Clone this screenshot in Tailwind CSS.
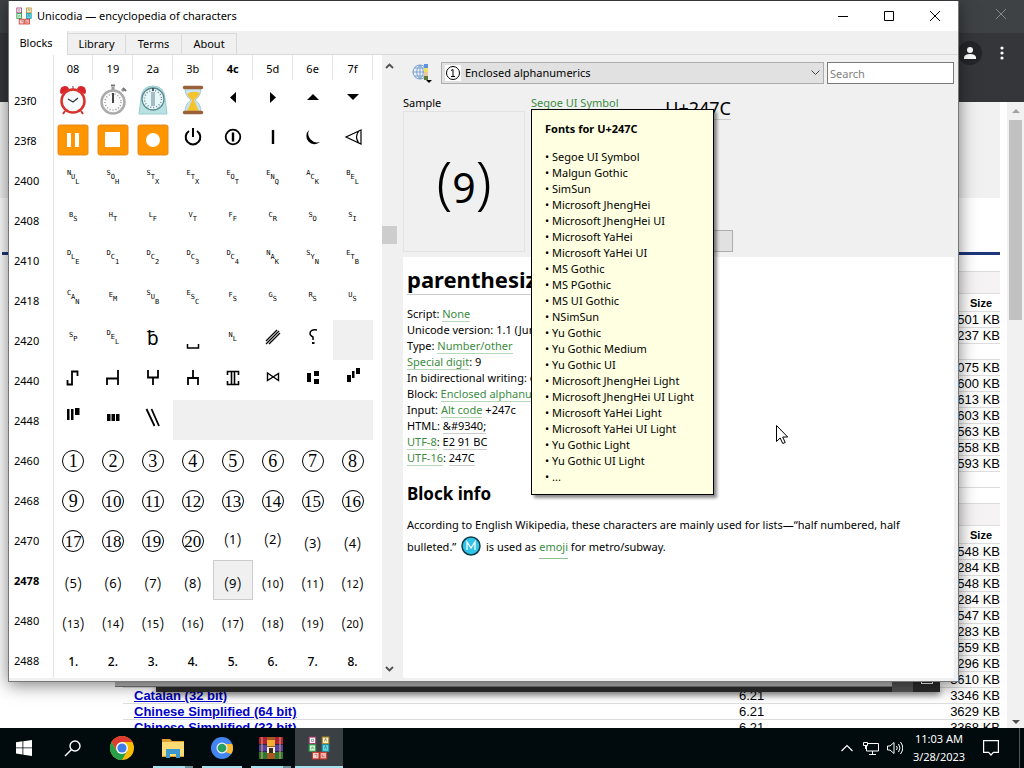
<!DOCTYPE html>
<html lang="en">
<head>
  <meta charset="UTF-8" />
  <meta name="viewport" content="width=device-width, initial-scale=1.0" />
  <title>Unicodia — encyclopedia of characters</title>
  <script src="https://cdn.jsdelivr.net/npm/@tailwindcss/browser@4"></script>
</head>
<body class="h-screen flex flex-col overflow-hidden bg-white text-black text-[11px] leading-4 font-['Noto_Sans',sans-serif]">

  <svg class="hidden">
    <symbol id="logo" viewBox="0 0 20 22">
      <g stroke-width="1">
        <rect x="1" y="1" width="6" height="6" fill="#fff" stroke="#a03a70"/>
        <rect x="13" y="1" width="6" height="6" fill="#fdf3c0" stroke="#b08a30"/>
        <rect x="1" y="8" width="6" height="6" fill="#c8f5d0" stroke="#2a9a48"/>
        <rect x="13" y="8" width="6" height="6" fill="#5fdcec" stroke="#1896a8"/>
        <rect x="4" y="15" width="6" height="6" fill="#ffd0cc" stroke="#c8382c"/>
        <rect x="11" y="15" width="6" height="6" fill="#ffb0a8" stroke="#c8382c"/>
      </g>
      <path d="M3 3h2v2H3zM15 5l1-3 1 3M3 12l1-2 1 2M15 12l1-3 1 3M6 17h2v2M13 17v2h2" fill="none" stroke="#555" stroke-width=".5"/>
    </symbol>
  </svg>

  <div class="relative flex-1 overflow-hidden">

    <!-- browser behind -->
    <div class="absolute inset-0 flex flex-col bg-white">
      <div class="h-[33px] shrink-0 bg-[#3f4245] flex justify-end">
        <div class="w-[46px] flex items-start justify-center pt-2">
          <svg class="w-3 h-3" viewBox="0 0 12 12" stroke="#85888b" fill="none"><path d="M1 1l10 10M11 1L1 11"/></svg>
        </div>
      </div>
      <div class="h-[69px] shrink-0 bg-[#35363a] flex justify-end gap-[14px] pt-2 pr-4">
        <span class="w-6 h-6 rounded-full bg-[#242528] flex items-center justify-center">
          <svg class="w-3 h-3" viewBox="0 0 12 12" fill="#fff"><circle cx="6" cy="3" r="3"/><path d="M0 12V10q1-3 6-3t6 3v2z"/></svg>
        </span>
        <svg class="w-3 h-6" viewBox="0 0 12 24" fill="#fff"><circle cx="6" cy="7" r="1.600"/><circle cx="6" cy="12" r="1.600"/><circle cx="6" cy="17" r="1.600"/></svg>
      </div>
      <div class="flex-1 flex min-h-0 font-['Liberation_Sans',sans-serif] text-[13px]">
        <div class="flex-1 overflow-hidden mr-[7px]">
          <div class="h-24 bg-[#f1f1f1]"></div>
          <div class="mt-[54px] ml-[2px] h-[3px] bg-[#1c3679]"></div>
          <div class="pl-[123px] pt-4">
            <table class="w-full table-fixed border-collapse" id="langs">
              <colgroup><col class="w-[616px]" /><col /><col class="w-[90px]" /></colgroup>
            </table>
          </div>
        </div>
        <div class="w-[17px] bg-[#f1f1f1] flex flex-col items-center pt-[7px] pb-1">
          <svg class="w-2 h-1 shrink-0" viewBox="0 0 8 4" fill="#a3a3a3"><path d="M0 4l4-4 4 4z"/></svg>
          <div class="mt-[7px] w-[13px] h-[200px] bg-[#c1c1c1]"></div>
          <svg class="mt-auto w-2 h-1 shrink-0" viewBox="0 0 8 4" fill="#505050"><path d="M0 0h8l-4 4z"/></svg>
        </div>
      </div>
    </div>

    <!-- edges of the other windows -->
    <div class="absolute left-[156px] right-[84px] bottom-[36px] h-2 bg-[#2b2b2b] shadow-[0_3px_6px_rgba(0,0,0,.5)]"></div>
    <div class="absolute left-[115px] right-[116px] bottom-[41px] h-6 bg-[#bcbcbc] border-b border-[#777]"></div>
    <div class="absolute right-[84px] bottom-[36px] w-12 h-6 bg-[#555] flex justify-end">
      <div class="w-[27px] bg-[#2b2b2b] flex justify-center pt-2"><div class="w-3 h-2 border border-white"></div></div>
    </div>

    <!-- Unicodia -->
    <div class="absolute left-2 right-[65px] top-px bottom-[46px] flex flex-col bg-[#f0f0f0] border-x border-b border-[#777] shadow-[0_3px_16px_rgba(0,0,0,.5)]">
      <header class="h-[30px] shrink-0 bg-white flex items-center">
        <svg class="ml-[7px] w-4 h-[18px]"><use href="#logo"/></svg>
        <h1 class="ml-[5px] flex-1">Unicodia — encyclopedia of characters</h1>
        <button class="w-[46px] h-full flex items-center justify-center" aria-label="Minimize"><svg class="w-3 h-3" viewBox="0 0 12 12"><path d="M1 6.500h10" stroke="#000"/></svg></button>
        <button class="w-[46px] h-full flex items-center justify-center" aria-label="Maximize"><svg class="w-3 h-3" viewBox="0 0 12 12"><path d="M1.500 1.500h9v9h-9z" fill="none" stroke="#000"/></svg></button>
        <button class="w-[46px] h-full flex items-center justify-center" aria-label="Close"><svg class="w-3 h-3" viewBox="0 0 12 12"><path d="M1 1l10 10M11 1L1 11" fill="none" stroke="#000"/></svg></button>
      </header>

      <nav class="h-6 shrink-0 flex items-end border-b border-[#d9d9d9]">
        <button class="w-[59px] h-6 -mb-px pr-1 bg-white border-r border-[#d9d9d9]">Blocks</button>
        <button class="w-[58px] h-[21px] border-t border-r border-[#d9d9d9]">Library</button>
        <button class="w-[56px] h-[21px] border-t border-r border-[#d9d9d9]">Terms</button>
        <button class="w-[55px] h-[21px] border-t border-r border-[#d9d9d9]">About</button>
      </nav>

      <div class="flex-1 min-h-0 flex pb-[3px] pr-1">
        <!-- character grid -->
        <section class="w-[394px] shrink-0 flex overflow-hidden">
          <div class="flex-1 bg-white overflow-hidden">
            <table class="table-fixed border-collapse w-[364px]">
              <colgroup><col class="w-11" /></colgroup>
              <thead id="cols"></thead>
              <tbody id="chars"></tbody>
            </table>
          </div>
          <div class="w-[15px] mr-[6px] flex flex-col items-center pt-2 pb-1">
            <svg class="w-[9px] h-[6px]" viewBox="0 0 9 6" fill="none" stroke="#505050" stroke-width="1.800"><path d="M1 5l3.500-3.500L8 5"/></svg>
            <div class="mt-[157px] w-full h-[18px] bg-[#cdcdcd]"></div>
            <svg class="mt-auto mb-[2px] w-[9px] h-[6px]" viewBox="0 0 9 6" fill="none" stroke="#505050" stroke-width="1.800"><path d="M1 1l3.500 3.500L8 1"/></svg>
          </div>
        </section>

        <section class="flex-1 min-w-0 flex flex-col">
          <div class="h-[202px] shrink-0 pt-[7px]">
            <div class="flex items-center pl-[9px] h-[22px]">
              <button class="w-5 h-5 mr-[9px]" aria-label="Sort blocks">
                <svg class="w-5 h-5" viewBox="0 0 20 20" fill="none">
                  <circle cx="8" cy="9" r="7" stroke="#6d9bd0"/>
                  <path d="M8 2v14M1 9h14M2.500 5h11M2.500 13h11M8 2q-7 7 0 14M8 2q7 7 0 14" stroke="#6d9bd0" stroke-width=".9"/>
                  <path d="M12 1h4v4h-4z" fill="#5b93e0"/><path d="M12 5h4v4h-4z" fill="#f0e060"/><path d="M12 9h4v4h-4z" fill="#e9c9a0"/><path d="M12 13h4v4h-4z" fill="#5c7a3c"/>
                  <path d="M14 17h6l-3 3z" fill="#000"/>
                </svg>
              </button>
              <div class="relative flex-1">
                <select aria-label="Block" class="appearance-none block w-full h-[22px] pl-[23px] bg-[#e1e1e1] border border-[#adadad]"><option>Enclosed alphanumerics</option></select>
                <svg class="absolute left-1 top-[3px] w-4 h-4 bg-white" viewBox="0 0 16 16" fill="none" stroke="#000"><circle cx="8" cy="8" r="6.500"/><path d="M6 5.500l2-1v7M6 11.500h4"/></svg>
                <svg class="absolute right-1 top-2 w-[9px] h-[6px]" viewBox="0 0 9 6" fill="none" stroke="#444"><path d="M.5.5l4 4 4-4"/></svg>
              </div>
              <input type="text" aria-label="Search" placeholder="Search" class="ml-[3px] w-[127px] h-[22px] px-[2px] bg-white border border-[#7a7a7a] placeholder:text-[#7f7f7f]" />
            </div>
            <div class="flex pt-[11px]">
              <div class="w-[122px] mr-[6px]">
                <p>Sample</p>
                <div class="h-[141px] border border-[#e2e2e2] flex items-center justify-center leading-none">
                  <span class="text-[57px] font-light">(</span><span class="text-[41px] pt-3">9</span><span class="text-[57px] font-light">)</span>
                </div>
              </div>
              <div class="w-[202px] flex flex-col">
                <div class="flex justify-between">
                  <a href="#" class="text-[#3c8c42]">Segoe UI Symbol</a>
                  <span class="mr-[2px] h-[25px] pt-[2px] text-[18px] leading-[22px] border-b border-[#ccc]">U+247C</span>
                </div>
                <button class="mt-auto h-[22px] bg-[#e1e1e1] border border-[#adadad]" aria-label="Copy"></button>
              </div>
            </div>
          </div>

          <article class="flex-1 bg-white pl-1 pt-2">
            <h2 class="text-[22px] leading-7 font-bold"><span class="border-b border-[#ccc]">parenthesized digit nine</span></h2>
            <div class="pt-[13px] whitespace-nowrap">
              <p>Script: <a href="#" class="text-[#3c8c42] border-b border-[#b5d8b5]">None</a></p>
              <p>Unicode version: 1.1 (June 1993)</p>
              <p>Type: <a href="#" class="text-[#3c8c42] border-b border-[#b5d8b5]">Number/other</a></p>
              <p><a href="#" class="text-[#3c8c42] border-b border-[#b5d8b5]">Special digit</a>: 9</p>
              <p>In bidirectional writing: other</p>
              <p>Block: <a href="#" class="text-[#3c8c42] border-b border-[#b5d8b5]">Enclosed alphanumerics</a></p>
              <p>Input: <a href="#" class="text-[#3c8c42] border-b border-[#b5d8b5]">Alt code</a> +247c</p>
              <p>HTML: <span class="border-b border-[#ccc]">&amp;#9340;</span></p>
              <p><a href="#" class="text-[#3c8c42] border-b border-[#b5d8b5]">UTF-8</a>: <span class="border-b border-[#ccc]">E2 91 BC</span></p>
              <p><a href="#" class="text-[#3c8c42] border-b border-[#b5d8b5]">UTF-16</a>: <span class="border-b border-[#ccc]">247C</span></p>
            </div>
            <h3 class="mt-4 text-[17px] leading-6 font-bold">Block info</h3>
            <p class="mt-2 max-w-[530px] leading-[22px]">According to English Wikipedia, these characters are mainly used for lists—“half numbered, half<br />bulleted.”
              <svg class="inline mx-[2px] -mt-1 w-5 h-5" viewBox="0 0 20 20" fill="none"><circle cx="10" cy="10" r="9" fill="#2fc4e8" stroke="#153a48" stroke-width="1.500"/><path d="M6 14V6l4 6 4-6v8" stroke="#fff" stroke-width="1.300"/></svg>
              is used as <a href="#" class="pb-1 text-[#3c8c42] border-b border-[#8fc08f]">emoji</a> for metro/subway.</p>
          </article>
        </section>
      </div>
    </div>

    <!-- font tooltip -->
    <div class="absolute left-[531px] top-[109px] w-[183px] h-[386px] pl-[13px] pt-[11px] bg-[#ffffe1] border border-black shadow-[3px_3px_3px_rgba(0,0,0,.45)] whitespace-nowrap">
      <h4 class="font-bold mb-3">Fonts for U+247C</h4>
      <ul id="fonts"></ul>
    </div>

    <!-- pointer -->
    <svg class="absolute left-[776px] top-[425px] w-3 h-5" viewBox="0 0 12 20"><path d="M.5.5v16l3.700-3.500 2.500 5.500 2.500-1-2.500-5.500h5z" fill="#fff" stroke="#000"/></svg>
  </div>

  <!-- taskbar -->
  <footer class="h-10 shrink-0 bg-[#010a0d] text-white flex">
    <button class="w-12 flex items-center justify-center" aria-label="Start"><svg class="w-4 h-4" viewBox="0 0 16 16" fill="#fff"><path d="M0 2.200L6.500 1.300V7.500H0zM7.300 1.200L16 0v7.500H7.300zM0 8.300h6.500v6.200L0 13.600zM7.300 8.300H16V16l-8.700-1.200z"/></svg></button>
    <button class="w-12 flex items-center justify-center" aria-label="Search"><svg class="w-[17px] h-[17px]" viewBox="0 0 17 17" fill="none" stroke="#fff" stroke-width="1.400"><circle cx="11" cy="6" r="5"/><path d="M7.500 9.500L1 16"/></svg></button>
    <button class="w-[52px] flex items-center justify-center" aria-label="Chrome">
      <svg class="w-6 h-6" viewBox="0 0 24 24"><circle cx="12" cy="12" r="12" fill="#fbbc05"/><path d="M1.600 6A12 12 0 0 1 22.400 6H12L6.800 15z" fill="#e03b30"/><path d="M1.600 6A12 12 0 0 0 12 24l5.200-9-10.400 0z" fill="#28a048"/><circle cx="12" cy="12" r="6" fill="#fff"/><circle cx="12" cy="12" r="4.600" fill="#3f7de8"/></svg>
    </button>
    <button class="w-[49px] flex flex-col items-center" aria-label="File Explorer">
      <svg class="mt-[9px] w-[22px] h-[22px]" viewBox="0 0 22 22"><path d="M0 2h8l2 2h12v16H0z" fill="#e0a030"/><path d="M0 5h22v14H0z" fill="#fbdc74"/><path d="M4 12h14v9h-4v-4H8v4H4z" fill="#3c98d0"/></svg>
      <span class="mt-auto w-10 h-[2px] bg-[#a5e0ee] border-r-8 border-[#6d929c]"></span>
    </button>
    <button class="w-[49px] flex flex-col items-center" aria-label="Chromium">
      <svg class="mt-[9px] w-[22px] h-[22px]" viewBox="0 0 22 22"><circle cx="11" cy="11" r="11" fill="#4285f0"/><path d="M14 7h7.200a11 11 0 0 1-1 10L14 15z" fill="#fbbc30"/><circle cx="11" cy="11" r="5.500" fill="#e6f0ff"/><circle cx="11" cy="11" r="4.300" fill="#28a060"/></svg>
      <span class="mt-auto w-10 h-[2px] bg-[#a5e0ee]"></span>
    </button>
    <button class="w-[49px] flex flex-col items-center" aria-label="WinRAR">
      <svg class="mt-[9px] w-6 h-[22px]" viewBox="0 0 24 22"><path d="M0 0h24v7H0z" fill="#b02038"/><path d="M0 7.500h24v7H0z" fill="#5040a8"/><path d="M0 15h24v7H0z" fill="#287838"/><path d="M3 0v22M21 0v22" stroke="#d0a050" stroke-width="1.200"/><path d="M8 0h8v22H8z" fill="#a85820"/><path d="M8 3h8v6H8z" fill="#f0b030"/><path d="M8 10h8v6H8z" fill="#f4ecd8"/><path d="M10 11h4v5h-4z" fill="#3a2a20"/></svg>
      <span class="mt-auto w-10 h-[2px] bg-[#a5e0ee] border-r-8 border-[#6d929c]"></span>
    </button>
    <button class="w-12 flex flex-col items-center bg-[#3a4043]" aria-label="Unicodia">
      <svg class="mt-2 w-[22px] h-6"><use href="#logo"/></svg>
      <span class="mt-auto w-full h-[2px] bg-[#a5e0ee]"></span>
    </button>
    <div class="ml-auto flex items-center">
      <svg class="w-3 h-3" viewBox="0 0 12 12" fill="none" stroke="#fff" stroke-width="1.200"><path d="M.5 9L6 3.500 11.500 9"/></svg>
      <svg class="ml-[10px] w-4 h-4" viewBox="0 0 16 16" fill="none" stroke="#fff"><path d="M5 3.500h10.500v7.500H3.500V6M9.500 11v3M6 14.500h7M.5 2.500h4v3h-4zM2.500 5.500V9"/></svg>
      <svg class="ml-2 w-4 h-4" viewBox="0 0 16 16" fill="none" stroke="#fff"><path d="M.5 6h2.500l4-3.500v11L3 10H.5z"/><path d="M9.500 6q1.500 2 0 4M11.500 4q3 4 0 8M13.500 2q4.500 6 0 12"/></svg>
      <div class="ml-2 w-[56px] text-center leading-[18px]"><p>11:03 AM</p><p>3/28/2023</p></div>
      <svg class="ml-[16px] mr-5 w-4 h-4" viewBox="0 0 16 16" fill="none" stroke="#fff" stroke-width="1.200"><path d="M.6.6h14.800v11.800h-5L8 15l-2.400-2.600h-5z"/></svg>
      <span class="w-[5px] h-10 border-l border-[#555]"></span>
    </div>
  </footer>

  <script>
    const svg = (body) => `<svg class="mx-auto w-8 h-8" viewBox="0 0 32 32" fill="none" stroke="#000" stroke-width="1.5">${body}</svg>`;
    const solid = (d) => svg(`<path d="${d}" fill="#000" stroke="none"/>`);
    const button = (body) => svg(`<rect x="1" y="1" width="30" height="30" rx="2" fill="#ff9500" stroke="#e88a1c" stroke-width="1"/>${body}`);
    // control pictures: letters going down in steps
    const steps = ["", "mt-1", "mt-[9px]"];
    const ctl = (s) => `<div class="flex justify-center pb-1.5 font-['DejaVu_Sans_Mono',monospace] text-[7px] leading-[6px]">${[...s].map((c, i) => `<span class="${steps[i]}">${c}</span>`).join("")}</div>`;
    const circ = (n) => `<div class="mx-auto mt-[2px] w-[22px] h-[22px] rounded-full border border-black flex items-center justify-center font-['Liberation_Serif',serif] ${n > 9 ? "text-[17px]" : "text-[18px]"} leading-none">${n}</div>`;
    const par = (n) => `<div class="flex items-center justify-center ${n < 3 ? "pb-1" : "pt-1"} leading-none"><span class="text-[17px] font-light">(</span><span class="${n > 9 ? "text-[11px]" : "text-[13px]"} pt-[2px]">${n}</span><span class="text-[17px] font-light">)</span></div>`;
    const dot = (n) => `<div class="pt-1 text-[12px] font-medium">${n}.</div>`;

    const clock = svg(`<path d="M8 27l-2 3M24 27l2 3" stroke="#c33" stroke-width="2"/><path d="M3 8q0-6 5-6 3 0 4 3L5 10q-2 0-2-2zM29 8q0-6-5-6-3 0-4 3l7 5q2 0 2-2z" fill="#d8242a" stroke="none"/><path d="M16 2v4" stroke="#888"/><circle cx="16" cy="17" r="11.500" fill="#f6fafa" stroke="#d8322c" stroke-width="2.500"/><path d="M11 15l5 3 5-4" stroke="#333" stroke-width="1.200"/>`);
    const stopwatch = svg(`<path d="M16 3v4M25 7l2-2" stroke="#999" stroke-width="3"/><path d="M14 1.500h4M26 4l3 3" stroke="#777" stroke-width="2"/><circle cx="16" cy="18" r="11.500" fill="#fafafa" stroke="#aaa" stroke-width="2.500"/><circle cx="16" cy="18" r="8" stroke="#999" stroke-width="1.500" stroke-dasharray="1 2"/><path d="M16 9v10" stroke="#444" stroke-width="2"/>`);
    const timer = svg(`<path d="M4 14Q5 2 16 2t12 12l2 16H2z" fill="#b8e2e2" stroke="#9accd0" stroke-width="1"/><circle cx="16" cy="15" r="11" fill="#e8f8f8" stroke="#5c8a94" stroke-width="1.300"/><circle cx="16" cy="15" r="8.500" stroke="#789" stroke-dasharray="1 2"/><path d="M14 8h4v14h-4z" fill="#a4bcc4" stroke="none"/><path d="M16 4v3" stroke="#333"/>`);
    const hourglass = svg(`<path d="M8 4q0 8 6 12-6 4-6 12h16q0-8-6-12 6-4 6-12z" fill="#c9e4f0" stroke="#a9c8d8" stroke-width="1"/><path d="M10 10q6-4 13-1-2 4-6 7l5 11H10l5-11q-4-3-5-6z" fill="#f4c430" stroke="none"/><path d="M7.500 3.500h17M7.500 28.500h17" stroke="#9a6038" stroke-width="3.500" stroke-linecap="round"/>`);

    const rows = [
      ["23f0", [clock, stopwatch, timer, hourglass,
        solid("M19 8v11l-6-5.500z"), solid("M13 8v11l6-5.500z"), solid("M10 16h12l-6-6z"), solid("M10 10h12l-6 6z")]],
      ["23f8", [
        button(`<path d="M10 9h4v14h-4zM18 9h4v14h-4z" fill="#fff" stroke="none"/>`),
        button(`<path d="M8 8h15v15H8z" fill="#fff" stroke="none"/>`),
        button(`<circle cx="16" cy="16" r="7" fill="#fff" stroke="none"/>`),
        svg(`<path d="M12 7a7.300 7.300 0 1 0 8 0M16 4v9" stroke-width="2"/>`),
        svg(`<circle cx="16" cy="13" r="7.300" stroke-width="1.800"/><path d="M16 8.500v9" stroke-width="2.400"/>`),
        svg(`<path d="M16 6v14" stroke-width="2.400"/>`),
        solid("M12 6a8 8 0 1 0 11 12A9 9 0 0 1 12 6z"),
        svg(`<path d="M24 6L9 13l15 7zM21.500 7.500q-4 5.500 0 11M24 6v14" stroke-width="1.200"/>`)]],
      ["2400", ["NUL", "SOH", "STX", "ETX", "EOT", "ENQ", "ACK", "BEL"].map(ctl)],
      ["2408", ["BS", "HT", "LF", "VT", "FF", "CR", "SO", "SI"].map(ctl)],
      ["2410", ["DLE", "DC1", "DC2", "DC3", "DC4", "NAK", "SYN", "ETB"].map(ctl)],
      ["2418", ["CAN", "EM", "SUB", "ESC", "FS", "GS", "RS", "US"].map(ctl)],
      ["2420", [ctl("SP"), ctl("DEL"),
        `<div class="pb-1 text-[19px] font-['Noto_Sans',sans-serif]">ƀ</div>`,
        svg(`<path d="M10.500 20v4h11v-4"/>`), ctl("NL"),
        svg(`<path d="M9 17l11-11M9 20L22 7M12 20L23 9" stroke-width="1.300"/>`),
        svg(`<path d="M20 6q-7-1-7 3.500 0 2 3 3.500v3"/><path d="M15 18h2.500v2H15z" fill="#000" stroke="none"/>`), null]],
      ["2440", [
        svg(`<path d="M10.500 16v4.500h4.500V7.500h5.500v4.500" stroke-width="1.800"/>`),
        svg(`<path d="M10 21v-6.500h11V21M21 6v10" stroke-width="1.800"/>`),
        svg(`<path d="M11 6v7.500h10V6M16 13.500V21" stroke-width="1.800"/>`),
        svg(`<path d="M11 21v-7h10v7M16 14V6" stroke-width="1.800"/>`),
        svg(`<path d="M10.500 11V7.500h11V11M10.500 17v3.500h11V17M14.500 7v13M17.500 7v13" stroke-width="1.600"/>`),
        svg(`<path d="M10.500 9v7.500l11-7v7z" stroke-width="1.400"/>`),
        solid("M10 9h4v9h-4zM17 7h5v5h-5zM17 15h5v5h-5z"),
        solid("M10 11h4v7h-4zM15 7h2.500v7H15zM19 4h4v6h-4z")]],
      ["2448", [
        solid("M10 5h2.500v11H10zM14 5h2.500v11H14zM18 4h4.500v7H18z"),
        solid("M10 10h3.500v7H10zM14.500 10H18v7h-3.500zM19 10h3.500v7H19z"),
        svg(`<path d="M9.500 5l8 17M14.500 5l7.500 17" stroke-width="1.800"/>`), null, null, null, null, null]],
      ["2460", [1, 2, 3, 4, 5, 6, 7, 8].map(circ)],
      ["2468", [9, 10, 11, 12, 13, 14, 15, 16].map(circ)],
      ["2470", [...[17, 18, 19, 20].map(circ), ...[1, 2, 3, 4].map(par)]],
      ["2478", [5, 6, 7, 8, 9, 10, 11, 12].map(par)],
      ["2480", [13, 14, 15, 16, 17, 18, 19, 20].map(par)],
      ["2488", [1, 2, 3, 4, 5, 6, 7, 8].map(dot)],
    ];

    document.getElementById("cols").innerHTML = `<tr class="h-[25px]"><th class="border-r border-[#e5e5e5]"></th>` +
      ["08", "19", "2a", "3b", "4c", "5d", "6e", "7f"].map((c) =>
        `<th class="border-r border-[#e5e5e5] pt-[2px] ${c === "4c" ? "font-bold" : "font-normal"}">${c}</th>`).join("") + "</tr>";

    document.getElementById("chars").innerHTML = rows.map(([code, cells]) =>
      `<tr class="h-10"><th class="pl-[5px] pt-[2px] text-left border-r border-[#e5e5e5] ${code === "2478" ? "font-bold" : "font-normal"}">${code}</th>` +
      cells.map((c, i) => {
        const picked = code === "2478" && i === 4;
        return `<td class="h-10 p-0 text-center align-middle ${c === null ? "bg-[#f0f0f0]" : picked ? "bg-[#f0f0f0] outline outline-[#ccc] -outline-offset-1" : ""}">${c || ""}</td>`;
      }).join("") + "</tr>").join("");

    document.getElementById("fonts").innerHTML = ["Segoe UI Symbol", "Malgun Gothic", "SimSun", "Microsoft JhengHei",
      "Microsoft JhengHei UI", "Microsoft YaHei", "Microsoft YaHei UI", "MS Gothic", "MS PGothic", "MS UI Gothic", "NSimSun",
      "Yu Gothic", "Yu Gothic Medium", "Yu Gothic UI", "Microsoft JhengHei Light", "Microsoft JhengHei UI Light",
      "Microsoft YaHei Light", "Microsoft YaHei UI Light", "Yu Gothic Light", "Yu Gothic UI Light", "..."]
      .map((f) => `<li>• ${f}</li>`).join("");

    const band = `<tr class="h-[22px] bg-[#f5f3f3] border-y border-[#ddd]"><td colspan="3"></td></tr>
      <tr class="h-[18px] text-[11px]"><th></th><th></th><th class="pr-2 text-right">Size</th></tr>`;
    const line = ([name, ver, size]) => `<tr class="h-4 border-t border-[#ddd] leading-[15px]">
      <td class="p-0 pl-[11px]"><a href="#" class="font-bold underline text-[#0000c8]">${name}</a></td>
      <td class="p-0">${ver}</td><td class="p-0 text-right">${size ? size + " KB" : ""}</td></tr>`;
    const blank = ["", "", ""];
    document.getElementById("langs").innerHTML += band +
      [["", "", 3501], ["", "", 3237], blank, ["", "", 3075], ["", "", 3600], ["", "", 3613], ["", "", 3603],
        ["", "", 3563], ["", "", 3558], ["", "", 3593], blank, blank].map(line).join("") + band +
      [["", "", 3548], ["", "", 3284], ["", "", 3548], ["", "", 3284], ["", "", 3547], ["", "", 3283], ["", "", 3559],
        ["", "", 3296], ["Catalan (64 bit)", "6.21", 3610], ["Catalan (32 bit)", "6.21", 3346],
        ["Chinese Simplified (64 bit)", "6.21", 3629], ["Chinese Simplified (32 bit)", "6.21", 3368]].map(line).join("");
  </script>
</body>
</html>
